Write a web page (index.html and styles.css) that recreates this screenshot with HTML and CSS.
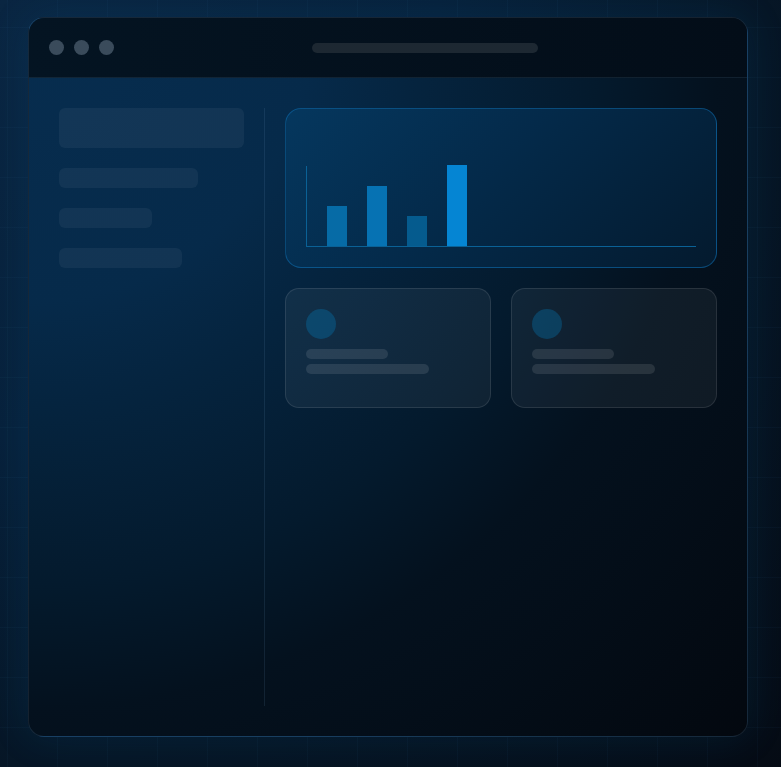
FILE: index.html
```html
<!DOCTYPE html>
<html>
<head>
<meta charset="utf-8">
<link rel="stylesheet" href="styles.css">
</head>
<body>
<div class="window">
  <div class="titlebar">
    <div class="dots"><span class="dot"></span><span class="dot"></span><span class="dot"></span></div>
    <div class="url"></div>
  </div>
  <div class="content">
    <aside class="sidebar">
      <div class="sb sb-big"></div>
      <div class="sb sb-75"></div>
      <div class="sb sb-50"></div>
      <div class="sb sb-66"></div>
    </aside>
    <main class="main">
      <div class="chart-card">
        <div class="chart">
          <div class="bar b1"></div>
          <div class="bar b2"></div>
          <div class="bar b3"></div>
          <div class="bar b4"></div>
        </div>
      </div>
      <div class="cards">
        <div class="card">
          <div class="avatar"></div>
          <div class="line l50"></div>
          <div class="line l75"></div>
        </div>
        <div class="card">
          <div class="avatar"></div>
          <div class="line l50"></div>
          <div class="line l75"></div>
        </div>
      </div>
    </main>
  </div>
</div>
</body>
</html>
```

FILE: styles.css
```css
html, body { margin: 0; padding: 0; }
body {
  width: 781px;
  height: 767px;
  overflow: hidden;
  font-family: "Liberation Sans", Arial, sans-serif;
  background-color: #06111e;
  background-image:
    linear-gradient(rgba(56,140,200,0.045) 1px, transparent 1px),
    linear-gradient(90deg, rgba(56,140,200,0.045) 1px, transparent 1px),
    radial-gradient(circle farthest-corner at 0 0, #0a2642 0%, #07213b 40%, #061626 70%, #050b14 100%);
  background-size: 50px 50px, 50px 50px, 100% 100%;
  background-position: 7px 27px, 7px 27px, 0 0;
  padding: 17px 0 0 28px;
  box-sizing: border-box;
}
.window {
  width: 720px;
  height: 720px;
  box-sizing: border-box;
  border: 1px solid rgba(120,170,210,0.16);
  border-radius: 16px;
  overflow: hidden;
  display: flex;
  flex-direction: column;
  background: radial-gradient(circle farthest-corner at 0 0, #072d4f 0%, #062a4a 28%, #05243f 38%, #041a2d 56%, #04111e 68%, #03080f 100%);
  box-shadow: 0 0 40px rgba(2,110,180,0.14);
}
.titlebar {
  height: 60px;
  flex: none;
  box-sizing: border-box;
  border-bottom: 1px solid rgba(120,170,210,0.12);
  background: linear-gradient(90deg, #041422 0%, #030d18 100%);
  display: flex;
  align-items: center;
  padding: 0 20px;
}
.dots { display: flex; gap: 10px; }
.dot {
  width: 15px; height: 15px; border-radius: 50%;
  background: #3a4b5b;
}
.url {
  margin-left: 198px;
  width: 226px;
  height: 10px;
  border-radius: 5px;
  background: #1d2832;
}
.content {
  flex: 1;
  display: flex;
  padding: 30px;
  gap: 20px;
}
.sidebar {
  width: 185px;
  padding-right: 20px;
  border-right: 1px solid rgba(120,170,210,0.12);
  display: flex;
  flex-direction: column;
  gap: 20px;
}
.sb {
  height: 20px;
  border-radius: 6px;
  background: rgba(255,255,255,0.05);
}
.sb-big { height: 40px; }
.sb-75 { width: 75%; }
.sb-50 { width: 50%; }
.sb-66 { width: 66.6%; }
.main {
  flex: 1;
  display: flex;
  flex-direction: column;
  gap: 20px;
}
.chart-card {
  height: 160px;
  box-sizing: border-box;
  border: 1px solid rgba(14,110,175,0.55);
  border-radius: 16px;
  padding: 20px;
  display: flex;
  align-items: flex-end;
  background: linear-gradient(135deg, #05375e 0%, #042a4a 45%, #041a2e 100%);
}
.chart {
  flex: 1;
  height: 80px;
  border-left: 1px solid #0a6196;
  border-bottom: 1px solid #0a6196;
  display: flex;
  align-items: flex-end;
  gap: 20px;
  padding: 0 20px;
}
.bar { width: 20px; }
.b1 { height: 40px; background: #066ba6; }
.b2 { height: 60px; background: #0672b3; }
.b3 { height: 30px; background: #055b8e; }
.b4 { height: 81px; background: #0585d3; }
.cards {
  display: flex;
  gap: 20px;
}
.card {
  flex: 1;
  height: 120px;
  box-sizing: border-box;
  border: 1px solid rgba(255,255,255,0.1);
  border-radius: 14px;
  padding: 20px;
  background: rgba(255,255,255,0.05);
  display: flex;
  flex-direction: column;
}
.avatar {
  width: 30px; height: 30px; border-radius: 50%;
  background: rgba(2,132,199,0.3);
  margin-bottom: 10px;
}
.line {
  height: 10px;
  border-radius: 5px;
  background: rgba(255,255,255,0.1);
}
.l50 { width: 50%; margin-bottom: 5px; }
.l75 { width: 75%; }
```
